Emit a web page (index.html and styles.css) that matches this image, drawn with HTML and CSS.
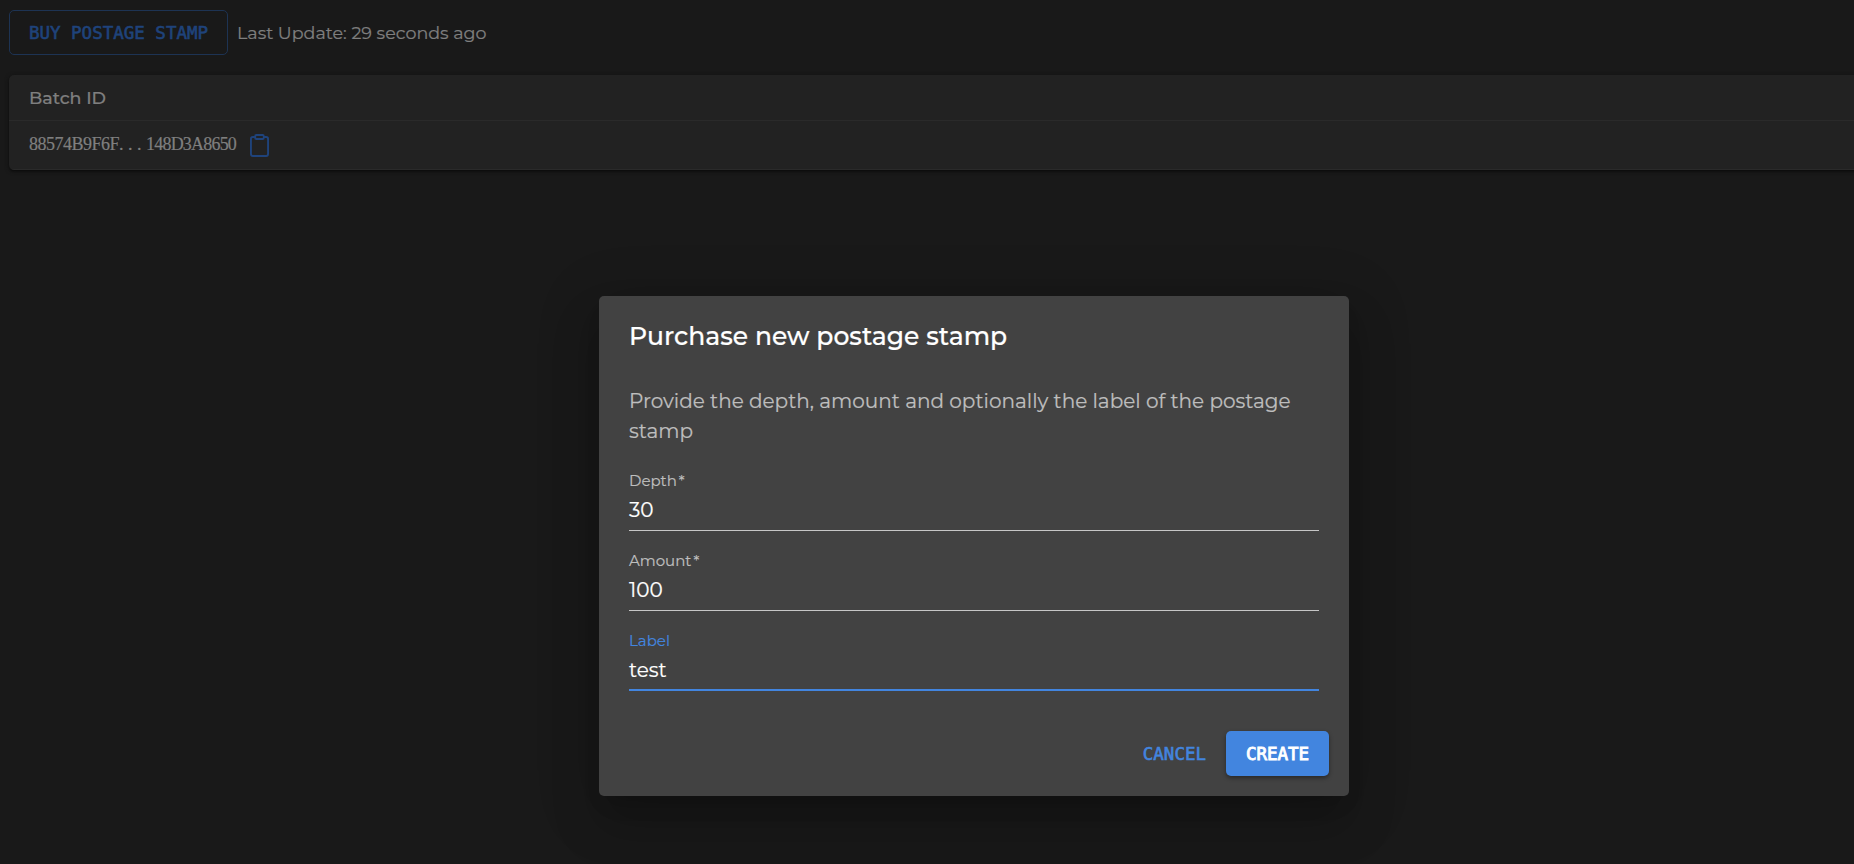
FILE: index.html
```
<!DOCTYPE html>
<html lang="en">
<head>
<meta charset="utf-8">
<title>Postage stamps</title>
<link rel="stylesheet" href="styles.css">
</head>
<body>
<div class="page">
  <div class="toolbar">
    <button class="btn btn-outlined">BUY POSTAGE STAMP</button>
    <span class="updated">Last Update: 29 seconds ago</span>
  </div>
  <div class="table">
    <div class="row head">Batch ID</div>
    <div class="row">
      <span class="batch"><span class="hash-start">88574B9F6F</span><span class="dots">...</span><span class="hash-end">148D3A8650</span></span>
      <svg class="clipboard" viewBox="0 0 20 24" fill="none" stroke="currentColor" stroke-width="2"><path d="M6 3H3Q1 3 1 5V21Q1 23 3 23H17Q19 23 19 21V5Q19 3 17 3H14"/><rect x="5.5" y="1" width="9" height="4.2" rx="1.2"/></svg>
    </div>
  </div>
</div>
<div class="overlay">
  <div class="dialog">
    <h2 class="title">Purchase new postage stamp</h2>
    <p class="intro">Provide the depth, amount and optionally the label of the postage stamp</p>
    <div class="field"><span class="label">Depth<span class="star">*</span></span><span class="value">30</span></div>
    <div class="field"><span class="label">Amount<span class="star">*</span></span><span class="value">100</span></div>
    <div class="field focused"><span class="label">Label</span><span class="value">test</span></div>
    <div class="actions">
      <button class="btn btn-text">CANCEL</button>
      <button class="btn btn-contained">CREATE</button>
    </div>
  </div>
</div>
</body>
</html>
```
FILE: styles.css
```
* { box-sizing: border-box; }
body { margin: 0; height: 864px; overflow: hidden; background: #191919; color: #7f7f7f; font-family: Montserrat, Inter, sans-serif; -webkit-text-stroke: 0.2px currentColor; }
.page { padding: 10px 0 0 9px; }
.toolbar { display: flex; align-items: center; gap: 9px; height: 45px; }
.btn { height: 45px; padding: 0; border: 0; border-radius: 5px; background: none; font: 17.5px "DejaVu Sans Mono", monospace; white-space: nowrap; -webkit-text-stroke: 0.6px currentColor; }
.btn-outlined { width: 219px; border: 1px solid #1d3353; color: #1f437b; }
.updated { font-size: 17.5px; }
.table { margin-top: 20px; width: 1900px; height: 95px; border-radius: 5px; background: #222; box-shadow: 0 2px 2px -1px #0c0c0c, 0 1px 4px #101010; overflow: hidden; }
.row { display: flex; align-items: center; padding: 0 20px; height: 49px; border-bottom: 1px solid #2a2a2a; }
.head { height: 46px; font-size: 17.5px; font-weight: 500; }
.batch { padding-bottom: 1px; font: 18px "Liberation Serif", serif; white-space: nowrap; }
.hash-start { letter-spacing: -0.5px; }
.dots { letter-spacing: 4.5px; }
.hash-end { letter-spacing: -0.8px; }
.clipboard { width: 19px; height: 23px; margin-left: 14px; color: #1f437b; }
.overlay { position: absolute; inset: 0; }
.dialog { position: absolute; left: 599px; top: 296px; width: 750px; height: 500px; padding: 20px 30px; border-radius: 5px; background: #424242; box-shadow: 0 14px 19px -9px rgba(0,0,0,.2), 0 30px 48px 4px rgba(0,0,0,.14), 0 11px 58px 10px rgba(0,0,0,.12); color: #fff; }
.title { margin: 0; font-size: 25px; line-height: 40px; font-weight: 500; letter-spacing: 0.04px; }
.intro { margin: 30px 0 25px; font-size: 20px; line-height: 30px; color: #bebebe; }
.field { height: 60px; margin-bottom: 20px; border-bottom: 1px solid #c6c6c6; display: flex; flex-direction: column; align-items: flex-start; }
.focused { border-bottom: 2px solid #4285df; }
.label { font-size: 15px; line-height: 20px; color: #bebebe; }
.star { margin-left: 2px; }
.focused .label { color: #4285df; }
.value { font-size: 20px; line-height: 38px; }
.actions { display: flex; justify-content: flex-end; gap: 20px; margin: 40px -10px 0 0; }
.btn-text { color: #4285df; }
.btn-contained { width: 103px; background: #4285df; color: #fff; box-shadow: 0 2px 4px rgba(0,0,0,.4); -webkit-text-stroke-width: 0.9px; }
```
